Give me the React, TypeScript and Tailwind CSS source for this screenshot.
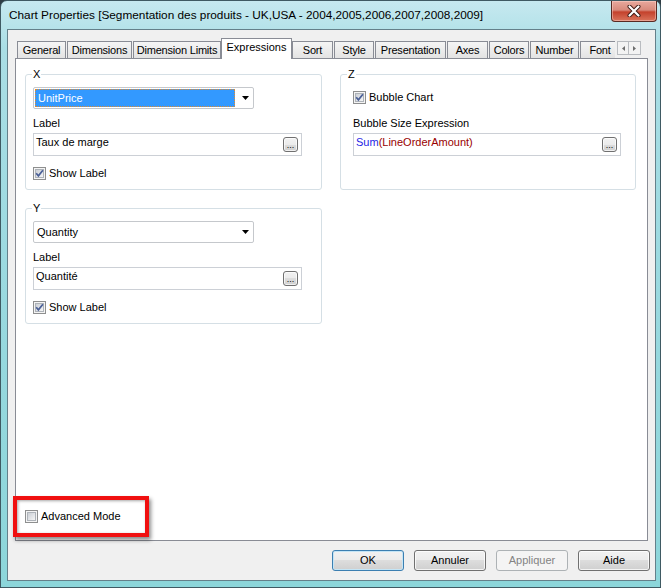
import React from 'react';

type Tab = { label: string; w: string; ml: string; active?: boolean };

const TABS: Tab[] = [
  { label: 'General', w: 'w-[49px]', ml: 'ml-[2px]' },
  { label: 'Dimensions', w: 'w-[65px]', ml: 'ml-[1px]' },
  { label: 'Dimension Limits', w: 'w-[88px]', ml: 'ml-[1px]' },
  { label: 'Expressions', w: 'w-[71px]', ml: 'ml-0', active: true },
  { label: 'Sort', w: 'w-[41px]', ml: 'ml-0' },
  { label: 'Style', w: 'w-[40px]', ml: 'ml-[1px]' },
  { label: 'Presentation', w: 'w-[71px]', ml: 'ml-[1px]' },
  { label: 'Axes', w: 'w-[41px]', ml: 'ml-[1px]' },
  { label: 'Colors', w: 'w-[40px]', ml: 'ml-[1px]' },
  { label: 'Number', w: 'w-[49px]', ml: 'ml-[1px]' },
  { label: 'Font', w: 'w-[40px]', ml: 'ml-[1px]' },
];

const CheckBox: React.FC<{ checked?: boolean }> = ({ checked }) => (
  <span className="relative block w-[13px] h-[13px] shrink-0 border border-[#8e8f8f] bg-[#f4f4f4] p-[1px]">
    <span className="block w-full h-full border border-[#aeb3b9] bg-gradient-to-br from-[#cbcfd5] to-[#f6f6f6]" />
    {checked && (
      <svg className="absolute left-0 top-0" width="11" height="11" viewBox="0 0 11 11">
        <path d="M2.2 5.2 L4.4 7.8 L8.9 2.2" fill="none" stroke="#4a5f97" strokeWidth="1.7" />
      </svg>
    )}
  </span>
);

const EllipsisButton: React.FC = () => (
  <div className="w-[15px] h-[15px] shrink-0 rounded-[3px] border border-[#707070] bg-[linear-gradient(to_bottom,#f2f2f2_0%,#ebebeb_50%,#dddddd_50%,#cfcfcf_100%)] shadow-[inset_0_0_0_1px_rgba(255,255,255,0.7)] flex items-end justify-center pb-[1px] text-[9px] leading-[9px]">
    ...
  </div>
);

const TextBox: React.FC<{ w: string; children: React.ReactNode }> = ({ w, children }) => (
  <div className={`${w} h-[23px] border border-[#ccd0d6] bg-white flex items-center pl-[2px] pr-[3px]`}>
    <span className="flex-1 self-start mt-[2px] leading-[13px] text-[11px]">{children}</span>
    <EllipsisButton />
  </div>
);

const ComboArrow: React.FC = () => (
  <svg className="ml-auto mr-[4px]" width="7" height="4" viewBox="0 0 7 4">
    <polygon points="0,0 7,0 3.5,4" fill="#000" />
  </svg>
);

const Combo: React.FC<{ value: string; selected?: boolean }> = ({ value, selected }) => (
  <div className="w-[221px] h-[22px] border border-[#c5c8cc] rounded-[2px] bg-white flex items-center">
    {selected ? (
      <div className="ml-[1px] w-[200px] h-[18px] bg-[#3399ff] border border-dotted border-[#e38b2e] text-white flex items-center pl-[2px]">
        {value}
      </div>
    ) : (
      <div className="pl-[3px]">{value}</div>
    )}
    <ComboArrow />
  </div>
);

const Group: React.FC<{ title: string; className: string; children: React.ReactNode }> = ({ title, className, children }) => (
  <div className={`relative border border-[#d5dfe5] rounded-[3px] ${className}`}>
    <span className="absolute left-[6px] top-[-7px] bg-white px-[1px] leading-[13px]">{title}</span>
    {children}
  </div>
);

const AxisGroup: React.FC<{ title: string; field: string; label: string; selected?: boolean }> = ({ title, field, label, selected }) => (
  <Group title={title} className="pt-[12px] pl-[7px] pb-[9px] flex flex-col">
    <Combo value={field} selected={selected} />
    <div className="mt-[8px] h-[13px] leading-[13px]">Label</div>
    <div className="mt-[3px]">
      <TextBox w="w-[269px]">{label}</TextBox>
    </div>
    <div className="mt-[11px] flex items-center gap-[3px] h-[13px]">
      <CheckBox checked />
      <span className="leading-[13px]">Show Label</span>
    </div>
  </Group>
);

const DialogButton: React.FC<{ label: string; isDefault?: boolean; disabled?: boolean }> = ({ label, isDefault, disabled }) => {
  if (disabled) {
    return (
      <div className="w-[72px] h-[21px] rounded-[3px] border border-[#adb2b5] bg-[#f4f4f4] text-[#838383] flex items-center justify-center">
        {label}
      </div>
    );
  }
  return (
    <div
      className={`w-[72px] h-[21px] rounded-[3px] border ${
        isDefault ? 'border-[#3c7fb1] shadow-[inset_0_0_0_1px_#c4e5f6]' : 'border-[#707070] shadow-[inset_0_0_0_1px_rgba(255,255,255,0.75)]'
      } bg-[linear-gradient(to_bottom,#f2f2f2_0%,#ebebeb_50%,#dddddd_50%,#cfcfcf_100%)] flex items-center justify-center`}
    >
      {label}
    </div>
  );
};

const CloseButton: React.FC = () => (
  <div className="w-[46px] h-[21px] mr-[3px] rounded-b-[4px] border border-t-0 border-[#5a2a22] bg-[linear-gradient(to_bottom,#e8a99d_0%,#d88a7c_45%,#c4422c_55%,#d9745c_100%)] shadow-[inset_0_0_0_1px_rgba(255,220,210,0.45)] flex items-center justify-center">
    <svg width="14" height="12" viewBox="0 0 14 12">
      <path d="M2.5 1.5 L11.5 10.5 M11.5 1.5 L2.5 10.5" stroke="#3d1a14" strokeWidth="4" strokeLinecap="round" />
      <path d="M2.5 1.5 L11.5 10.5 M11.5 1.5 L2.5 10.5" stroke="#ffffff" strokeWidth="2.2" strokeLinecap="round" />
    </svg>
  </div>
);

export default function App() {
  return (
    <div className="w-[661px] h-[588px] bg-[#2f3d45] font-['Liberation_Sans',Arial,sans-serif] text-[11px] text-black">
      <div className="w-full h-full rounded-t-[7px] border border-[#3f5a63] bg-[linear-gradient(to_bottom,#c6e9f0_0%,#aadee5_8%,#96d8de_60%,#8cd6da_100%)] flex flex-col">
        {/* title bar */}
        <div className="h-[28px] flex items-start justify-between">
          <span className="ml-[8px] mt-[7px] text-[11.8px] leading-[15px] text-black">
            Chart Properties [Segmentation des produits - UK,USA - 2004,2005,2006,2007,2008,2009]
          </span>
          <CloseButton />
        </div>

        {/* client area */}
        <div className="ml-[6px] w-[649px] flex-1 mb-[6px] border border-[#64808a] bg-[#f0f0f0] flex flex-col px-[7px] pt-[8px]">
          {/* tabs */}
          <div className="relative z-10 h-[21px] flex items-end">
            <div className="w-[600px] h-full flex items-end overflow-hidden">
              {TABS.map((t) =>
                t.active ? (
                  <div
                    key={t.label}
                    className={`${t.ml} ${t.w} shrink-0 h-[21px] bg-white border border-b-0 border-[#898c95] flex items-center justify-center pb-[3px]`}
                  >
                    {t.label}
                  </div>
                ) : (
                  <div
                    key={t.label}
                    className={`${t.ml} ${t.w} shrink-0 h-[17px] mb-[1px] border border-b-0 border-[#898c95] bg-gradient-to-b from-[#f5f5f5] to-[#e3e3e3] flex items-center justify-center tracking-[-0.2px]`}
                  >
                    {t.label}
                  </div>
                )
              )}
            </div>
            <div className="ml-[2px] mb-[4px] flex">
              <div className="w-[12px] h-[14px] border border-[#b9bcc0] bg-[#f3f3f3] flex items-center justify-center">
                <svg width="3" height="5" viewBox="0 0 3 5">
                  <polygon points="3,0 3,5 0,2.5" fill="#6d6d6d" />
                </svg>
              </div>
              <div className="w-[12px] h-[14px] border border-l-0 border-[#b9bcc0] bg-[#f3f3f3] flex items-center justify-center">
                <svg width="3" height="5" viewBox="0 0 3 5">
                  <polygon points="0,0 0,5 3,2.5" fill="#6d6d6d" />
                </svg>
              </div>
            </div>
          </div>

          {/* tab panel */}
          <div className="relative -mt-px flex-1 border border-[#898c95] bg-white flex flex-col">
            <div className="flex pt-[15px] pl-[9px] gap-[18px]">
              <div className="w-[297px] flex flex-col gap-[18px]">
                <AxisGroup title="X" field="UnitPrice" label="Taux de marge" selected />
                <AxisGroup title="Y" field="Quantity" label="Quantité" />
              </div>
              <Group title="Z" className="w-[296px] h-[116px] pt-[16px] pl-[12px] flex flex-col">
                <div className="flex items-center gap-[3px] h-[13px]">
                  <CheckBox checked />
                  <span className="leading-[13px]">Bubble Chart</span>
                </div>
                <div className="mt-[13px] h-[13px] leading-[13px]">Bubble Size Expression</div>
                <div className="mt-[3px]">
                  <TextBox w="w-[268px]">
                    <span className="text-[#1f1fe6]">Sum</span>
                    <span className="text-[#990000]">(LineOrderAmount)</span>
                  </TextBox>
                </div>
              </Group>
            </div>

            <div className="mt-auto pl-[9px] pb-[17px] flex items-center gap-[3px] h-[30px]">
              <CheckBox />
              <span className="leading-[13px]">Advanced Mode</span>
            </div>

            {/* annotation box */}
            <div className="absolute left-[-3px] bottom-[3px] w-[136px] h-[41px] border-[4px] border-[#f01010] shadow-[2px_3px_4px_rgba(0,0,0,0.45),inset_1px_1px_3px_rgba(0,0,0,0.35)]" />
          </div>

          {/* buttons */}
          <div className="h-[21px] mt-[9px] mb-[9px] mr-[-2px] flex justify-end gap-[10px]">
            <DialogButton label="OK" isDefault />
            <DialogButton label="Annuler" />
            <DialogButton label="Appliquer" disabled />
            <DialogButton label="Aide" />
          </div>
        </div>
      </div>
    </div>
  );
}
